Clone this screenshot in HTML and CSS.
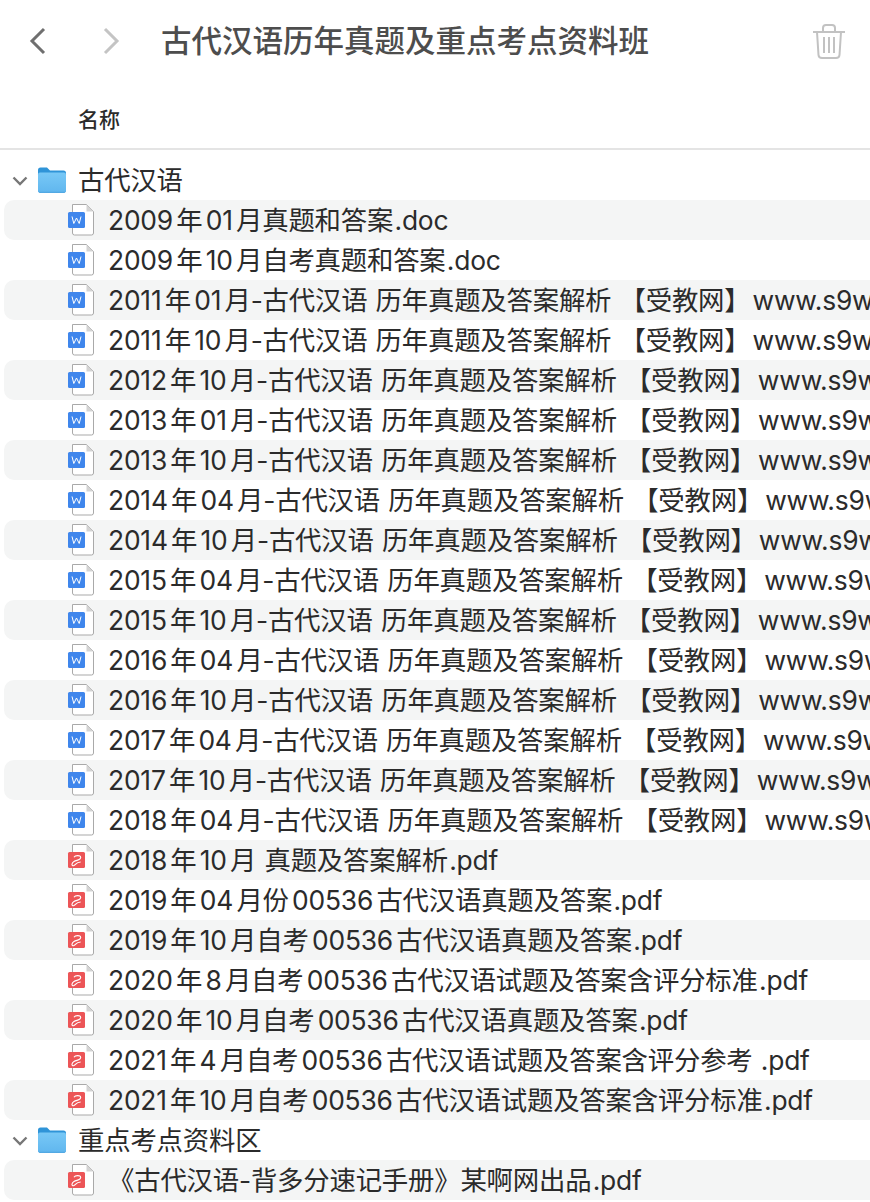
FILE: index.html
```html
<!DOCTYPE html>
<html lang="zh-CN">
<head>
    <meta charset="UTF-8">
    <title>古代汉语历年真题及重点考点资料班</title>
    <link rel="stylesheet" href="styles.css">
</head>
<body>
    <svg class="defs" width="0" height="0">
        <linearGradient id="folder-body" x1="0" y1="0" x2="0" y2="1">
            <stop offset="0" stop-color="#78c8f6"/>
            <stop offset="0.9" stop-color="#62b8ef"/>
            <stop offset="1" stop-color="#4da4e0"/>
        </linearGradient>
        <symbol id="file-base" viewBox="0 0 30 34">
            <path d="M5.500 1.500H19.500L26.500 8.500V30Q26.500 32 24.500 32H7.500Q5.500 32 5.500 30V1.500Z" fill="#fff" stroke="#a9a9a9" stroke-width="1"/>
            <path d="M19.500 1.500V8.500H26.500Z" fill="#d4d4d4"/>
        </symbol>
        <symbol id="icon-word" viewBox="0 0 30 34">
            <use href="#file-base"/>
            <rect x="1" y="9" width="17" height="16" rx="1.500" fill="#3f86ec"/>
            <path d="M5 13.500L6.800 20.500L9.500 15L12.200 20.500L14 13.500" fill="none" stroke="#fff" stroke-width="1"/>
        </symbol>
        <symbol id="icon-pdf" viewBox="0 0 30 34">
            <use href="#file-base"/>
            <rect x="1" y="9" width="17" height="16" rx="1.500" fill="#ec5557"/>
            <path d="M7 14.300C8 12.300 13.700 11.800 13.700 14.600C13.700 17.300 9.500 17 7 18.500C4.500 20 4.300 22.800 6.500 22.700C8.700 22.600 8.500 19 13.700 19" fill="none" stroke="#fff" stroke-width="1.100"/>
        </symbol>
        <symbol id="icon-folder" viewBox="0 0 30 28">
            <path d="M1 4Q1 1.500 3.500 1.500H10L13 4.500H26.500Q29 4.500 29 7V24Q29 27 26 27H4Q1 27 1 24Z" fill="#2f94d8"/>
            <path d="M1 8.500Q1 6.500 3 6.500H27Q29 6.500 29 8.500V24Q29 27 26 27H4Q1 27 1 24Z" fill="url(#folder-body)"/>
        </symbol>
    </svg>

    <div class="toolbar">
        <svg class="nav-arrow" width="20" height="30" viewBox="0 0 20 30"><path d="M16 3L4 15L16 27" fill="none" stroke="#6f6f6f" stroke-width="3"/></svg>
        <svg class="nav-arrow forward" width="20" height="30" viewBox="0 0 20 30"><path d="M4 3L16 15L4 27" fill="none" stroke="#c4c4c4" stroke-width="3"/></svg>
        <h1 class="title">古代汉语历年真题及重点考点资料班</h1>
        <svg class="trash" width="34" height="38" viewBox="0 0 34 38">
            <g fill="none" stroke="#c2c2c2" stroke-width="2">
                <path d="M1 10H33"/>
                <path d="M11 10V6Q11 3 14 3H20Q23 3 23 6V10"/>
                <path d="M5 10L6.500 33Q6.700 36 10 36H24Q27.300 36 27.500 33L29 10"/>
                <path d="M12 15V31M17 15V31M22 15V31"/>
            </g>
        </svg>
    </div>

    <div class="col-header">名称</div>

    <div class="list">
        <div class="row folder">
            <svg class="chevron" width="16" height="10" viewBox="0 0 16 10"><path d="M1.500 1.500L8 8L14.500 1.500" fill="none" stroke="#777" stroke-width="2.400"/></svg>
            <svg class="folder-icon" width="30" height="28"><use href="#icon-folder"/></svg>
            <span class="name">古代汉语</span>
        </div>
        <div class="row file shaded"><svg class="file-icon" width="30" height="34"><use href="#icon-word"/></svg><span class="name">2009年01月真题和答案<span class="ext">.doc</span></span></div>
        <div class="row file"><svg class="file-icon" width="30" height="34"><use href="#icon-word"/></svg><span class="name">2009年10月自考真题和答案<span class="ext">.doc</span></span></div>
        <div class="row file shaded"><svg class="file-icon" width="30" height="34"><use href="#icon-word"/></svg><span class="name">2011年01月-古代汉语 历年真题及答案解析 【受教网】<span class="site">www.s9w</span></span></div>
        <div class="row file"><svg class="file-icon" width="30" height="34"><use href="#icon-word"/></svg><span class="name">2011年10月-古代汉语 历年真题及答案解析 【受教网】<span class="site">www.s9w</span></span></div>
        <div class="row file shaded"><svg class="file-icon" width="30" height="34"><use href="#icon-word"/></svg><span class="name">2012年10月-古代汉语 历年真题及答案解析 【受教网】<span class="site">www.s9w</span></span></div>
        <div class="row file"><svg class="file-icon" width="30" height="34"><use href="#icon-word"/></svg><span class="name">2013年01月-古代汉语 历年真题及答案解析 【受教网】<span class="site">www.s9w</span></span></div>
        <div class="row file shaded"><svg class="file-icon" width="30" height="34"><use href="#icon-word"/></svg><span class="name">2013年10月-古代汉语 历年真题及答案解析 【受教网】<span class="site">www.s9w</span></span></div>
        <div class="row file"><svg class="file-icon" width="30" height="34"><use href="#icon-word"/></svg><span class="name">2014年04月-古代汉语 历年真题及答案解析 【受教网】<span class="site">www.s9w</span></span></div>
        <div class="row file shaded"><svg class="file-icon" width="30" height="34"><use href="#icon-word"/></svg><span class="name">2014年10月-古代汉语 历年真题及答案解析 【受教网】<span class="site">www.s9w</span></span></div>
        <div class="row file"><svg class="file-icon" width="30" height="34"><use href="#icon-word"/></svg><span class="name">2015年04月-古代汉语 历年真题及答案解析 【受教网】<span class="site">www.s9w</span></span></div>
        <div class="row file shaded"><svg class="file-icon" width="30" height="34"><use href="#icon-word"/></svg><span class="name">2015年10月-古代汉语 历年真题及答案解析 【受教网】<span class="site">www.s9w</span></span></div>
        <div class="row file"><svg class="file-icon" width="30" height="34"><use href="#icon-word"/></svg><span class="name">2016年04月-古代汉语 历年真题及答案解析 【受教网】<span class="site">www.s9w</span></span></div>
        <div class="row file shaded"><svg class="file-icon" width="30" height="34"><use href="#icon-word"/></svg><span class="name">2016年10月-古代汉语 历年真题及答案解析 【受教网】<span class="site">www.s9w</span></span></div>
        <div class="row file"><svg class="file-icon" width="30" height="34"><use href="#icon-word"/></svg><span class="name">2017年04月-古代汉语 历年真题及答案解析 【受教网】<span class="site">www.s9w</span></span></div>
        <div class="row file shaded"><svg class="file-icon" width="30" height="34"><use href="#icon-word"/></svg><span class="name">2017年10月-古代汉语 历年真题及答案解析 【受教网】<span class="site">www.s9w</span></span></div>
        <div class="row file"><svg class="file-icon" width="30" height="34"><use href="#icon-word"/></svg><span class="name">2018年04月-古代汉语 历年真题及答案解析 【受教网】<span class="site">www.s9w</span></span></div>
        <div class="row file shaded"><svg class="file-icon" width="30" height="34"><use href="#icon-pdf"/></svg><span class="name">2018年10月 真题及答案解析<span class="ext">.pdf</span></span></div>
        <div class="row file"><svg class="file-icon" width="30" height="34"><use href="#icon-pdf"/></svg><span class="name">2019年04月份00536古代汉语真题及答案<span class="ext">.pdf</span></span></div>
        <div class="row file shaded"><svg class="file-icon" width="30" height="34"><use href="#icon-pdf"/></svg><span class="name">2019年10月自考00536古代汉语真题及答案<span class="ext">.pdf</span></span></div>
        <div class="row file"><svg class="file-icon" width="30" height="34"><use href="#icon-pdf"/></svg><span class="name">2020年8月自考00536古代汉语试题及答案含评分标准<span class="ext">.pdf</span></span></div>
        <div class="row file shaded"><svg class="file-icon" width="30" height="34"><use href="#icon-pdf"/></svg><span class="name">2020年10月自考00536古代汉语真题及答案<span class="ext">.pdf</span></span></div>
        <div class="row file"><svg class="file-icon" width="30" height="34"><use href="#icon-pdf"/></svg><span class="name">2021年4月自考00536古代汉语试题及答案含评分参考 .pdf</span></div>
        <div class="row file shaded"><svg class="file-icon" width="30" height="34"><use href="#icon-pdf"/></svg><span class="name">2021年10月自考00536古代汉语试题及答案含评分标准<span class="ext">.pdf</span></span></div>
        <div class="row folder">
            <svg class="chevron" width="16" height="10" viewBox="0 0 16 10"><path d="M1.500 1.500L8 8L14.500 1.500" fill="none" stroke="#777" stroke-width="2.400"/></svg>
            <svg class="folder-icon" width="30" height="28"><use href="#icon-folder"/></svg>
            <span class="name">重点考点资料区</span>
        </div>
        <div class="row file shaded"><svg class="file-icon" width="30" height="34"><use href="#icon-pdf"/></svg><span class="name">《古代汉语-背多分速记手册》某啊网出品<span class="ext">.pdf</span></span></div>
    </div>
</body>
</html>
```

FILE: styles.css
```css
html, body {
    margin: 0;
    height: 100%;
    overflow: hidden;
}

body {
    font-family: Inter, "Noto Sans CJK SC", sans-serif;
    background: #fff;
    color: #2b2b2b;
}

.defs {
    position: absolute;
}

.toolbar {
    display: flex;
    align-items: center;
    height: 82px;
    padding-left: 28px;
}

.nav-arrow {
    flex: none;
}

.nav-arrow.forward {
    margin-left: 53px;
}

.title {
    margin: 0 0 0 40px;
    padding-bottom: 4px;
    font-size: 30.5px;
    font-weight: 500;
    color: #4d4d4d;
    flex: 1;
}

.trash {
    margin-right: 24px;
}

.col-header {
    height: 66px;
    line-height: 76px;
    padding-left: 78px;
    font-size: 21px;
    font-weight: 500;
    border-bottom: 2px solid #e4e4e4;
}

.list {
    padding: 10px 0 0 4px;
}

.row {
    display: flex;
    align-items: center;
    height: 40px;
    white-space: nowrap;
    overflow: hidden;
    border-radius: 10px 0 0 10px;
    font-size: 26.4px;
    letter-spacing: -0.2px;
    word-spacing: 1px;
}

.row.shaded {
    background: #f4f5f5;
}

.name {
    padding-bottom: 4px;
    text-autospace: normal;
}

.ext {
    margin-left: -2px;
}

.site {
    margin-left: 2px;
}

.chevron {
    flex: none;
    margin: 2px 0 0 8px;
}

.folder-icon {
    flex: none;
    margin-left: 9px;
}

.row.folder .name {
    margin-left: 11px;
}

.file-icon {
    flex: none;
    margin-left: 63px;
}

.row.file .name {
    margin-left: 11px;
}
```
